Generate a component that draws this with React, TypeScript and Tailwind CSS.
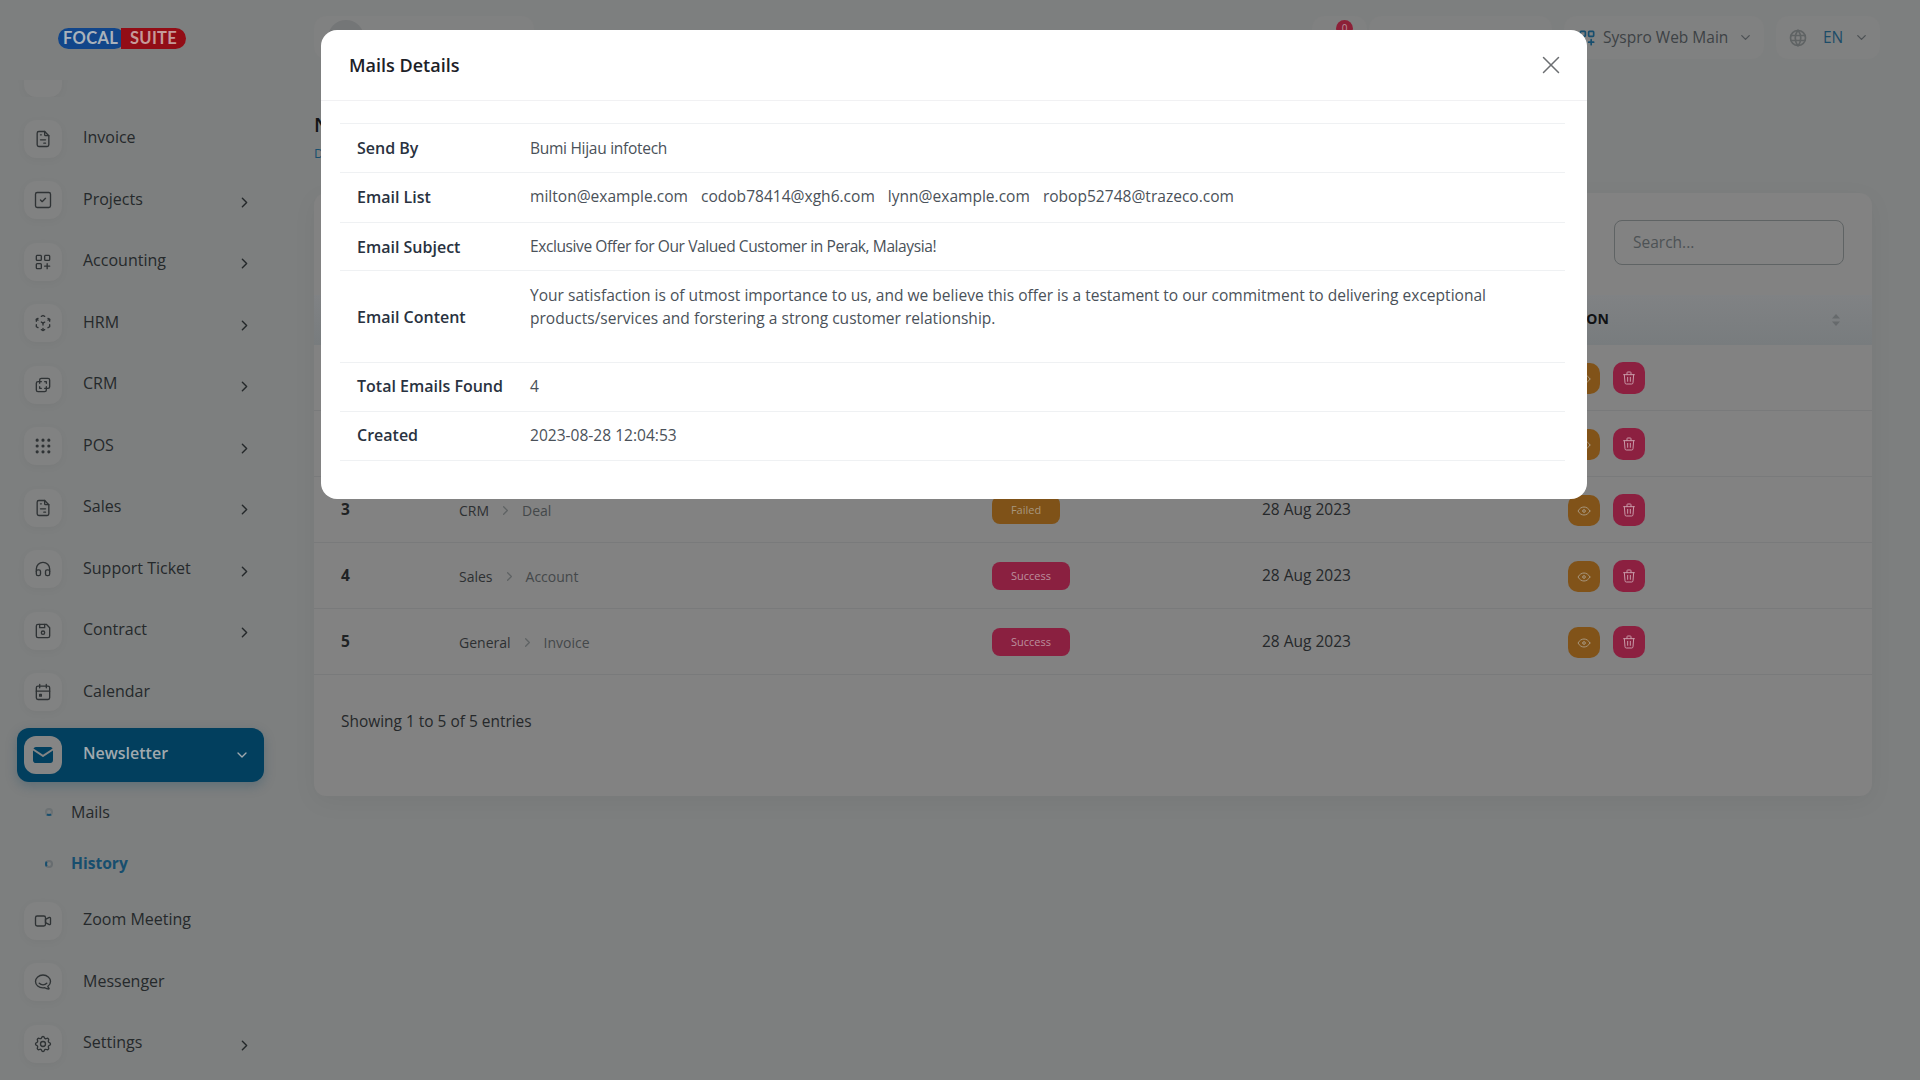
import { ReactNode } from "react";
import {
  TbCube3dSphere,
  TbBrandHipchat,
  TbCalendarEvent,
  TbChevronDown,
  TbChevronRight,
  TbDeviceFloppy,
  TbEye,
  TbFileInvoice,
  TbGridDots,
  TbHeadphones,
  TbLayersDifference,
  TbLayoutGridAdd,
  TbMailFilled,
  TbSettings,
  TbSquareCheck,
  TbTrash,
  TbVideo,
  TbWorld,
  TbX,
} from "react-icons/tb";

function Tile({ children }: { children?: ReactNode }) {
  return (
    <span className="flex h-[38px] w-[38px] shrink-0 items-center justify-center rounded-xl bg-[#818282] text-[#2f3335] shadow-[0_2px_8px_rgba(0,0,0,0.04)]">
      {children}
    </span>
  );
}

function NavItem({ icon, label, arrow }: { icon: ReactNode; label: string; arrow?: boolean }) {
  return (
    <div className="flex h-[61.5px] items-center pl-6 pr-[61px]">
      <Tile>{icon}</Tile>
      <span className="-mt-[3px] ml-[21px] flex-1 text-[16px] font-medium text-[#25292b]">{label}</span>
      {arrow && <TbChevronRight size={17} strokeWidth={2} className="mt-1 text-[#25292b]" />}
    </div>
  );
}

function SubItem({ label, active }: { label: string; active?: boolean }) {
  return (
    <div className="flex h-[52px] items-center pl-[45px]">
      <span className={active ? "h-2 w-2 rounded-full border-2 border-[#686d70] border-l-[#174e6e]" : "h-2 w-2 rounded-full border-2 border-[#6d7274] border-b-[#174e6e]"} />
      <span className={active ? "ml-[18px] text-[15.6px] font-bold text-[#174e6e]" : "ml-[18px] text-[16px] text-[#25292b]"}>{label}</span>
    </div>
  );
}

function Sidebar() {
  return (
    <aside className="flex h-[1080px] w-[314px] shrink-0 flex-col overflow-hidden">
      <div className="flex h-20 shrink-0 pl-[58px] pt-7">
        <div className="flex h-[21px] w-[128px] overflow-hidden rounded-full text-[16.5px] leading-[21px] font-bold font-['Lato',sans-serif]">
          <span className="w-[67px] rounded-r-full bg-[#12468a] pl-[5px] tracking-[0.3px] text-[#aab2bb]">FOCAL</span>
          <span className="-ml-1 flex-1 bg-[#920d16] pl-[9px] tracking-[0.3px] text-[#c59a9a]">SUITE</span>
        </div>
      </div>
      <div className="flex h-[17px] shrink-0 items-end overflow-hidden pl-6">
        <Tile />
      </div>
      <div className="h-[11px] shrink-0" />
      <NavItem icon={<TbFileInvoice size={20} strokeWidth={1.6} />} label="Invoice" />
      <NavItem icon={<TbSquareCheck size={20} strokeWidth={1.6} />} label="Projects" arrow />
      <NavItem icon={<TbLayoutGridAdd size={20} strokeWidth={1.6} />} label="Accounting" arrow />
      <NavItem icon={<TbCube3dSphere size={20} strokeWidth={1.6} />} label="HRM" arrow />
      <NavItem icon={<TbLayersDifference size={20} strokeWidth={1.6} />} label="CRM" arrow />
      <NavItem icon={<TbGridDots size={20} strokeWidth={1.8} />} label="POS" arrow />
      <NavItem icon={<TbFileInvoice size={20} strokeWidth={1.6} />} label="Sales" arrow />
      <NavItem icon={<TbHeadphones size={20} strokeWidth={1.6} />} label="Support Ticket" arrow />
      <NavItem icon={<TbDeviceFloppy size={20} strokeWidth={1.6} />} label="Contract" arrow />
      <NavItem icon={<TbCalendarEvent size={20} strokeWidth={1.6} />} label="Calendar" />
      <div className="mx-[17px] mt-[5px] flex h-[54px] w-[247px] shrink-0 items-center rounded-xl bg-[#023f5e] pl-[7px] pr-[14px] shadow-[0_4px_12px_rgba(2,60,90,0.25)]">
        <span className="flex h-[38px] w-[38px] items-center justify-center rounded-xl bg-[#858585] text-[#023f5e]">
          <TbMailFilled size={24} />
        </span>
        <span className="-mt-1 ml-[21px] flex-1 text-[16px] font-semibold text-[#a0a9ae]">Newsletter</span>
        <TbChevronDown size={16} className="text-[#a0a9ae]" />
      </div>
      <div className="mt-1">
        <SubItem label="Mails" />
        <SubItem label="History" active />
      </div>
      <NavItem icon={<TbVideo size={20} strokeWidth={1.6} />} label="Zoom Meeting" />
      <NavItem icon={<TbBrandHipchat size={20} strokeWidth={1.6} />} label="Messenger" />
      <NavItem icon={<TbSettings size={20} strokeWidth={1.6} />} label="Settings" arrow />
    </aside>
  );
}

function Topbar() {
  return (
    <header className="flex h-[76px] shrink-0 items-start justify-between pt-4">
      <div className="flex h-[43px] w-[220px] items-center rounded-xl bg-[#808181] pl-[14px]">
        <span className="h-9 w-9 rounded-full bg-[#747677]" />
      </div>
      <div className="mr-[-8px] flex items-center gap-3">
        <div className="relative h-[43px] w-[55px] rounded-xl bg-[#808181]">
          <span className="absolute right-[14px] top-1 flex h-[17px] w-[17px] items-center justify-center rounded-full bg-[#8c2038] text-[10px] text-[#b8929c]">0</span>
        </div>
        <div className="-ml-[10px] h-[43px] w-[183px] rounded-xl bg-[#808181]" />
        <div className="flex h-[43px] w-[200px] items-center rounded-xl bg-[#808181] pl-[13px]">
          <TbLayoutGridAdd size={20} className="text-[#174e6e]" />
          <span className="ml-[6px] mt-px text-[15.5px] text-[#3d4245]">Syspro Web Main</span>
          <TbChevronDown size={15} className="ml-[10px] text-[#4c5154]" />
        </div>
        <div className="flex h-[43px] w-[104px] items-center rounded-xl bg-[#808181] pl-[12px]">
          <TbWorld size={20} className="text-[#5f6364]" />
          <span className="ml-[15px] mt-px text-[15.5px] font-medium text-[#1c4c68]">EN</span>
          <TbChevronDown size={15} className="ml-[11px] text-[#4c5154]" />
        </div>
      </div>
    </header>
  );
}

function SortArrows() {
  return (
    <svg width="10" height="14" viewBox="0 0 10 14" className="fill-[#666a6c]">
      <path d="M5 1 9 5.5H1z" />
      <path d="M5 13 1 8.5h8z" />
    </svg>
  );
}

const rows = [
  { id: 1, module: "Sales", sub: "Invoice", status: "Success", date: "28 Aug 2023" },
  { id: 2, module: "Accounting", sub: "Bill", status: "Success", date: "28 Aug 2023" },
  { id: 3, module: "CRM", sub: "Deal", status: "Failed", date: "28 Aug 2023" },
  { id: 4, module: "Sales", sub: "Account", status: "Success", date: "28 Aug 2023" },
  { id: 5, module: "General", sub: "Invoice", status: "Success", date: "28 Aug 2023" },
];

function HistoryCard() {
  return (
    <section className="h-[603px] rounded-xl bg-[#828282] shadow-[0_6px_24px_rgba(0,0,0,0.05)]">
      <div className="flex h-[102px] justify-end pr-7 pt-[27px]">
        <div className="flex h-[45px] w-[230px] items-center rounded-lg border border-[#5f6364] pl-[18px] text-[15.5px] text-[#4d5255]">Search...</div>
      </div>
      <div className="grid h-[50px] grid-cols-[118px_533px_270px_306px_1fr] items-center bg-gradient-to-b from-[#808284] to-[#787c7e] pl-[27px] text-[14px] font-bold text-[#101214]">
        <span>#</span>
        <span>MODULE</span>
        <span>STATUS</span>
        <span>DATE</span>
        <div className="flex items-center justify-between pr-[31px]">
          <span className="-ml-[13px] -mt-1">ACTION</span>
          <SortArrows />
        </div>
      </div>
      {rows.map((row) => (
        <div key={row.id} className="grid h-[66px] grid-cols-[118px_533px_270px_306px_1fr] items-center border-b border-[#797a7b] pl-[27px] text-[15.5px]">
          <span className="font-bold text-[#1f2224]">{row.id}</span>
          <div className="flex items-center pt-px text-[14px]">
            <span className="text-[#2d3032]">{row.module}</span>
            <TbChevronRight size={15} className="mx-[9px] text-[#5f6364]" />
            <span className="text-[#44484a]">{row.sub}</span>
          </div>
          <span>
            <span className={row.status === "Failed" ? "inline-flex h-7 w-[68px] items-center justify-center rounded-lg bg-[#7f5218] pt-px text-[11px] text-[#a8977e]" : "inline-flex h-7 w-[78px] items-center justify-center rounded-lg bg-[#8a2040] pt-px text-[11px] text-[#bb8f9d]"}>
              {row.status}
            </span>
          </span>
          <span className="pt-px text-[#25282a]">{row.date}</span>
          <div className="flex items-center gap-[13px]">
            <span className="mt-[2px] flex h-[31px] w-8 items-center justify-center rounded-[10px] bg-[#815319] text-[#a8977e]">
              <TbEye size={16} strokeWidth={1.5} />
            </span>
            <span className="flex h-8 w-8 items-center justify-center rounded-[10px] bg-[#8c2040] text-[#c89aa8]">
              <TbTrash size={16} strokeWidth={1.5} />
            </span>
          </div>
        </div>
      ))}
      <p className="pl-[27px] pt-[35px] text-[15.45px] text-[#25282a]">Showing 1 to 5 of 5 entries</p>
    </section>
  );
}

function DetailRow({ label, height, children }: { label: string; height: string; children: ReactNode }) {
  return (
    <div className={`flex items-center border-b border-[#eff1f3] ${height}`}>
      <span className="w-[190px] shrink-0 pl-[17px] text-[16px] font-semibold text-[#293240]">{label}</span>
      <div className="flex-1 pr-[50px] text-[15.56px] leading-[23px] text-[#4a5159]">{children}</div>
    </div>
  );
}

function MailsModal() {
  return (
    <div className="absolute left-[321px] top-[30px] z-10 h-[469px] w-[1266px] rounded-2xl bg-white">
      <div className="flex h-[71px] items-center justify-between border-b border-[#f1f1f3] pl-7 pr-[21px]">
        <h2 className="text-[18px] font-semibold text-[#1c2127]">Mails Details</h2>
        <TbX size={30} strokeWidth={1.2} className="text-[#6c6f72]" />
      </div>
      <div className="ml-[19px] mr-[22px] mt-[22px] border-t border-[#eff1f3]">
        <DetailRow label="Send By" height="h-[49px]">
          <span className="tracking-[-0.3px]">Bumi Hijau infotech</span>
        </DetailRow>
        <DetailRow label="Email List" height="h-[50px] pb-[2px]">
          <div className="flex gap-[13px]">
            <span>milton@example.com</span>
            <span>codob78414@xgh6.com</span>
            <span>lynn@example.com</span>
            <span>robop52748@trazeco.com</span>
          </div>
        </DetailRow>
        <DetailRow label="Email Subject" height="h-[48px]">
          <span className="tracking-[-0.42px]">Exclusive Offer for Our Valued Customer in Perak, Malaysia!</span>
        </DetailRow>
        <DetailRow label="Email Content" height="h-[92px]">
          <p className="pb-5">Your satisfaction is of utmost importance to us, and we believe this offer is a testament to our commitment to delivering exceptional products/services and forstering a strong customer relationship.</p>
        </DetailRow>
        <DetailRow label="Total Emails Found" height="h-[49px] pb-[2px]">4</DetailRow>
        <DetailRow label="Created" height="h-[49px] pb-[2px]">2023-08-28 12:04:53</DetailRow>
      </div>
    </div>
  );
}

export default function App() {
  return (
    <div className="relative flex h-[1080px] overflow-hidden bg-[#7d7f7f] font-['Open_Sans',sans-serif]">
      <Sidebar />
      <main className="flex flex-1 flex-col pr-12">
        <Topbar />
        <div className="h-[117px] shrink-0 pt-[34px]">
          <h1 className="text-[20px] font-semibold text-[#111315]">Newsletter History</h1>
          <p className="mt-1 text-[13px] text-[#174e6e]">Dashboard</p>
        </div>
        <HistoryCard />
      </main>
      <MailsModal />
    </div>
  );
}
